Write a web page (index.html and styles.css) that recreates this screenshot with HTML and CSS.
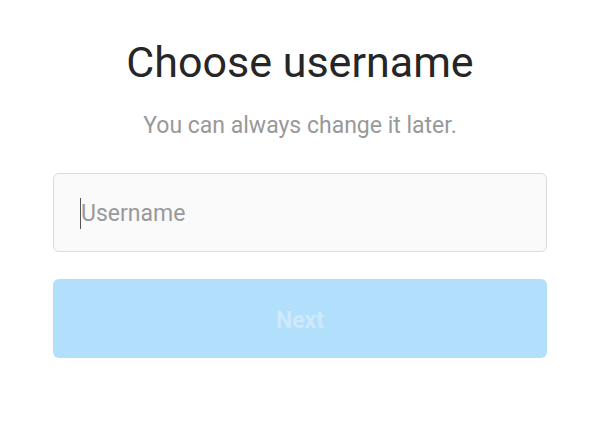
FILE: index.html
```html
<!DOCTYPE html>
<html>
<head>
<meta charset="utf-8">
<link rel="stylesheet" href="styles.css">
</head>
<body>
<main class="page">
  <h1 class="title">Choose username</h1>
  <p class="subtitle">You can always change it later.</p>
  <div class="field"><span class="caret"></span><span class="placeholder">Username</span></div>
  <button class="next">Next</button>
</main>
</body>
</html>
```
FILE: styles.css
```css
html, body { margin: 0; padding: 0; background: #fff; }
body { font-family: Roboto, "Noto Sans", sans-serif; width: 600px; height: 432px; overflow: hidden; }
.page { width: 494px; margin: 0 auto; display: flex; flex-direction: column; align-items: stretch; }
.title { margin: 36px 0 0; font-size: 43px; font-weight: 400; color: #262626; text-align: center; line-height: 52px; }
.subtitle { margin: 24px 0 0; font-size: 23px; color: #999; text-align: center; line-height: 28px; }
.field { margin-top: 33px; box-sizing: border-box; height: 79px; border: 1px solid #dbdbdb; border-radius: 6px; background: #fafafa; display: flex; align-items: center; padding: 2px 0 0 26px; }
.caret { width: 1px; height: 31px; background: #555; }
.placeholder { font-size: 23px; color: #999; }
.next { margin-top: 27px; height: 79px; border: none; border-radius: 6px; background: #b2dffc; color: #cdeafd; font-family: Roboto, sans-serif; font-weight: 700; font-size: 23px; padding: 3px 0 0; }
```
